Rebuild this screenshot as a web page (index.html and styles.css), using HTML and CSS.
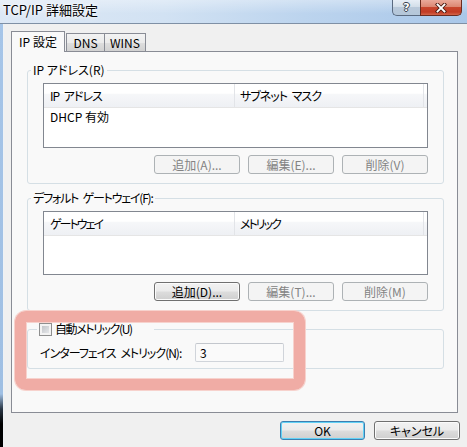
FILE: index.html
```html
<!DOCTYPE html>
<html lang="ja">
<head>
<meta charset="utf-8">
<title>TCP/IP 詳細設定</title>
<link rel="stylesheet" href="styles.css">
</head>
<body>
<div class="window">
  <div class="titlebar">
    <span class="title">TCP/IP 詳細設定</span>
    <div class="caption">
      <span class="cap-btn cap-help">?</span>
      <span class="cap-btn cap-close">
        <svg width="12" height="10" viewBox="0 0 12 10">
          <path d="M2.5 1.5 L9.5 8.5 M9.5 1.5 L2.5 8.5" stroke="#4b1d14" stroke-width="3.6" stroke-linecap="square" fill="none"/>
          <path d="M2.5 1.5 L9.5 8.5 M9.5 1.5 L2.5 8.5" stroke="#ffffff" stroke-width="1.8" stroke-linecap="square" fill="none"/>
        </svg>
      </span>
    </div>
  </div>
  <div class="body-row">
    <div class="edge"></div>
    <div class="main">
      <div class="tabs">
        <div class="tab tab-active">IP 設定</div>
        <div class="tab tab-dns">DNS</div>
        <div class="tab tab-wins">WINS</div>
      </div>
      <div class="panel">
        <div class="group g1">
          <div class="group-title">IP アドレス(R)</div>
          <div class="list">
            <div class="list-head">
              <span class="col c1 tight1">IP アドレス</span>
              <span class="col c2 tight1">サブネット マスク</span>
            </div>
            <div class="list-row">DHCP 有効</div>
          </div>
          <div class="btn-row">
            <div class="btn btn-disabled">追加(A)...</div>
            <div class="btn btn-disabled">編集(E)...</div>
            <div class="btn btn-disabled">削除(V)</div>
          </div>
        </div>
        <div class="group g2">
          <div class="group-title tight12">デフォルト ゲートウェイ(F):</div>
          <div class="list list-short">
            <div class="list-head">
              <span class="col c1 tight2">ゲートウェイ</span>
              <span class="col c2 tight2">メトリック</span>
            </div>
          </div>
          <div class="btn-row">
            <div class="btn">追加(D)...</div>
            <div class="btn btn-disabled">編集(T)...</div>
            <div class="btn btn-disabled">削除(M)</div>
          </div>
        </div>
        <div class="group g3">
          <div class="group-title check-title">
            <span class="checkbox"></span>
            <span class="tight14">自動メトリック(U)</span>
          </div>
          <div class="metric-row">
            <span class="metric-label tight1">インターフェイス メトリック(N):</span>
            <span class="textbox">3</span>
          </div>
        </div>
      </div>
      <div class="footer">
        <div class="btn btn-default">OK</div>
        <div class="btn">キャンセル</div>
      </div>
    </div>
  </div>
</div>
<div class="highlight"></div>
</body>
</html>
```

FILE: styles.css
```css
* {
  box-sizing: border-box;
}

html, body {
  margin: 0;
  padding: 0;
}

body {
  width: 467px;
  height: 447px;
  overflow: hidden;
  background: #f0f0f0;
  font-family: "Noto Sans CJK JP", "Noto Sans", sans-serif;
  font-size: 12px;
  line-height: 14px;
  color: #000;
  font-feature-settings: "palt";
}

.window {
  width: 467px;
  height: 447px;
}

/* Title bar */
.titlebar {
  height: 24px;
  display: flex;
  align-items: flex-start;
  border-bottom: 1px solid #7f90a5;
  background:
    linear-gradient(180deg, rgba(255,255,255,0.35) 0%, rgba(255,255,255,0) 60%),
    linear-gradient(90deg, #dde8f5 0%, #d2e2f3 35%, #bcd4ee 65%, #a9c7e9 100%);
}

.title {
  padding: 2px 0 0 3px;
  font-size: 13px;
  line-height: 16px;
  color: #000;
  text-shadow: 0 0 6px #ffffff, 0 0 3px #ffffff;
  font-feature-settings: normal;
}

.caption {
  margin-left: auto;
  margin-right: 5px;
  display: flex;
}

.cap-btn {
  height: 16px;
  display: flex;
  align-items: center;
  justify-content: center;
  border: 1px solid #5a6a80;
  border-top: none;
}

.cap-help {
  width: 28px;
  border-radius: 0 0 0 5px;
  border-right: none;
  background: linear-gradient(180deg, #e7eef6 0%, #d3dee9 45%, #b9c9da 50%, #b4c6d9 100%);
  color: #ffffff;
  font-family: "DejaVu Sans", sans-serif;
  font-weight: bold;
  font-size: 11px;
  line-height: 14px;
  text-shadow: 0 0 1px #2c3440, 1px 0 0 #3b4654, -1px 0 0 #3b4654, 0 1px 0 #3b4654, 0 -1px 0 #3b4654;
}

.cap-close {
  width: 42px;
  border-color: #6b2b1f;
  border-radius: 0 0 5px 0;
  background: linear-gradient(180deg, #eaa99a 0%, #dc8773 45%, #c8452d 50%, #c23b24 80%, #d3654a 100%);
}

/* Body */
.body-row {
  display: flex;
  height: 423px;
}

.edge {
  width: 4px;
  border-right: 1px solid #eef2f6;
  background: linear-gradient(180deg, #a6c5e8 0px, #9fbfe3 370px, #2a3644 385px, #000000 400px);
}

.main {
  flex: 1;
  padding: 7px 0 0 7px;
}

/* Tabs */
.tabs {
  display: flex;
  align-items: flex-end;
  height: 20px;
  position: relative;
  z-index: 1;
}

.tab {
  height: 18px;
  display: flex;
  align-items: center;
  justify-content: center;
  border: 1px solid #898c95;
  border-bottom: none;
  padding-top: 1px;
  background: linear-gradient(180deg, #f3f3f3 0%, #ebebeb 50%, #dedede 51%, #d2d2d2 100%);
}

.tab-active {
  width: 54px;
  height: 21px;
  margin-bottom: -1px;
  background: #f9f9f9;
  padding-top: 0;
}

.tab-dns {
  width: 39px;
  margin-left: 1px;
}

.tab-wins {
  width: 41px;
  border-left: none;
}

/* Panel */
.panel {
  width: 447px;
  height: 362px;
  border: 1px solid #898c95;
  background: #f9f9f9;
  padding-left: 15px;
}

.group {
  width: 417px;
  border: 1px solid #d5dfe5;
  border-radius: 3px;
  padding: 0 15px 9px 15px;
}

.g1 {
  margin-top: 18px;
}

.g2 {
  margin-top: 14px;
}

.g3 {
  margin-top: 18px;
  padding: 0 15px 6px 12px;
}

.group-title {
  display: flex;
  width: max-content;
  height: 14px;
  margin: -8px 0 0 -12px;
  padding: 0 2px;
  background: #f9f9f9;
  white-space: pre;
}

.check-title {
  width: 117px;
  margin-left: -3px;
  align-items: center;
  gap: 3px;
}

.checkbox {
  width: 13px;
  height: 13px;
  border: 1px solid #8e8f8f;
  background: linear-gradient(135deg, #b8bbc0 0%, #d9dbde 60%, #eef0f1 100%);
  box-shadow: inset 0 0 0 2px #f3f3f3;
  flex: none;
}

/* Narrow kana widths, like the bitmap UI font */
.tight1 {
  letter-spacing: -1px;
  word-spacing: 3px;
}

.tight12 {
  letter-spacing: -1.2px;
  word-spacing: 3px;
}

.tight14 {
  letter-spacing: -1.4px;
}

.tight2 {
  letter-spacing: -2px;
}

/* List view */
.list {
  margin-top: 6px;
  height: 65px;
  border: 1px solid #828790;
  background: #ffffff;
}

.list-short {
  height: 64px;
}

.list-head {
  display: flex;
  height: 24px;
  border-bottom: 1px solid #e5e5e5;
  background: linear-gradient(180deg, #ffffff 0%, #ffffff 40%, #f6f7f9 45%, #eef0f4 100%);
}

.col {
  line-height: 23px;
  border-right: 1px solid #e2e4e8;
  white-space: pre;
}

.c1 {
  width: 191px;
  padding-left: 6px;
}

.c2 {
  width: 189px;
  padding-left: 5px;
}

.list-row {
  height: 18px;
  line-height: 18px;
  padding-left: 6px;
}

/* Buttons */
.btn-row {
  display: flex;
  justify-content: flex-end;
  gap: 8px;
  margin-top: 7px;
}

.btn {
  width: 86px;
  height: 19px;
  display: flex;
  align-items: center;
  justify-content: center;
  line-height: 17px;
  border: 1px solid #707070;
  border-radius: 3px;
  background: linear-gradient(180deg, #f2f2f2 0%, #ebebeb 49%, #dddddd 51%, #cfcfcf 100%);
  box-shadow: inset 0 0 0 1px #fbfbfb;
  color: #000;
  white-space: nowrap;
}

.btn-disabled {
  border-color: #adb2b5;
  background: #f4f4f4;
  box-shadow: none;
  color: #838383;
}

.btn-default {
  width: 85px;
  border-color: #3c7fb1;
  box-shadow: inset 0 0 0 1px #62d2f6;
}

/* Metric row */
.metric-row {
  display: flex;
  align-items: center;
  margin-top: 7px;
}

.metric-label {
  width: 155px;
  flex: none;
  white-space: pre;
}

.textbox {
  width: 89px;
  height: 19px;
  line-height: 17px;
  padding-left: 4px;
  border: 1px solid #d0d4da;
  border-top-color: #c3c7cd;
  border-radius: 2px;
  background: #fafafa;
}

/* Footer */
.footer {
  display: flex;
  justify-content: flex-end;
  gap: 9px;
  margin-top: 8px;
  padding-right: 7px;
}

/* Annotation highlight */
.highlight {
  position: absolute;
  left: 15px;
  top: 311px;
  width: 290px;
  height: 79px;
  border: 11px solid #f0aca5;
  border-radius: 11px;
  box-shadow: 0 0 0 1px #f7d2cd, inset 0 0 0 1px #f7d2cd;
}
```
